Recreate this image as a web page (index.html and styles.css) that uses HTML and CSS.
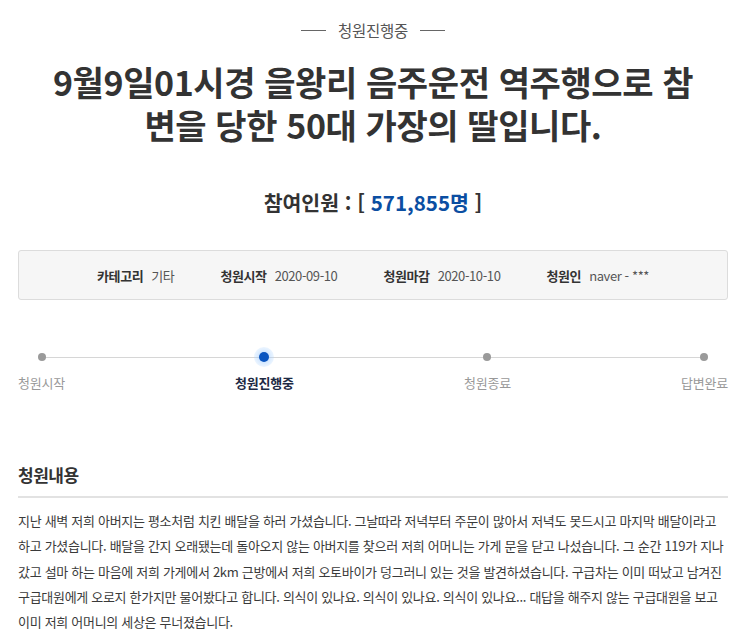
FILE: index.html
```html
<!DOCTYPE html>
<html lang="ko">
<head>
<meta charset="utf-8">
<link rel="stylesheet" href="styles.css">
</head>
<body>
<div class="page">
  <div class="status"><span class="dash"></span><span>청원진행중</span><span class="dash"></span></div>
  <h1 class="title"><span class="tl">9월9일01시경 을왕리 음주운전 역주행으로 참</span><span class="tl">변을 당한 50대 가장의 딸입니다.</span></h1>
  <div class="count">참여인원 : [ <span class="num">571,855명</span> ]</div>
  <div class="info">
    <div class="item"><b>카테고리</b><span>기타</span></div>
    <div class="item"><b>청원시작</b><span>2020-09-10</span></div>
    <div class="item"><b>청원마감</b><span>2020-10-10</span></div>
    <div class="item"><b>청원인</b><span>naver - ***</span></div>
  </div>
  <div class="steps">
    <div class="step"><span class="dot"></span><span class="label">청원시작</span></div>
    <div class="step active"><span class="dot"></span><span class="label">청원진행중</span></div>
    <div class="step"><span class="dot"></span><span class="label">청원종료</span></div>
    <div class="step"><span class="dot"></span><span class="label">답변완료</span></div>
  </div>
  <h2 class="section">청원내용</h2>
  <div class="content">
    <span class="ln">지난 새벽 저희 아버지는 평소처럼 치킨 배달을 하러 가셨습니다. 그날따라 저녁부터 주문이 많아서 저녁도 못드시고 마지막 배달이라고</span>
    <span class="ln">하고 가셨습니다. 배달을 간지 오래됐는데 돌아오지 않는 아버지를 찾으러 저희 어머니는 가게 문을 닫고 나섰습니다. 그 순간 119가 지나</span>
    <span class="ln">갔고 설마 하는 마음에 저희 가게에서 2km 근방에서 저희 오토바이가 덩그러니 있는 것을 발견하셨습니다. 구급차는 이미 떠났고 남겨진</span>
    <span class="ln">구급대원에게 오로지 한가지만 물어봤다고 합니다. 의식이 있나요. 의식이 있나요. 의식이 있나요... 대답을 해주지 않는 구급대원을 보고</span>
    <span class="ln">이미 저희 어머니의 세상은 무너졌습니다.</span>
  </div>
</div>
</body>
</html>
```
FILE: styles.css
```css
* { box-sizing: border-box; }
html, body { margin: 0; padding: 0; background: #fff; }
body {
  font-family: "Noto Sans CJK KR", "Noto Sans", sans-serif;
  color: #333;
  overflow: hidden;
}
.page { padding: 0 15px 0 18px; }

.status {
  padding-top: 20px;
  height: 40px;
  line-height: 20px;
  display: flex;
  justify-content: center;
  align-items: center;
  gap: 12px;
  font-size: 15.5px;
  color: #555;
  letter-spacing: -0.3px;
}
.status .dash { width: 25px; height: 1px; background: #666; }

.title {
  margin: 20px 0 0;
  font-size: 34px;
  line-height: 43px;
  font-weight: 700;
  text-align: center;
  letter-spacing: -0.4px;
  color: #333;
}
.title .tl { display: block; height: 43px; overflow: visible; }

.count {
  margin-top: 42px;
  line-height: 28px;
  font-size: 20.5px;
  font-weight: 700;
  text-align: center;
  color: #333;
}
.count .num { color: #0b4ea2; }

.info {
  margin-top: 34px;
  height: 50px;
  border: 1px solid #dcdcdc;
  border-radius: 3px;
  background: #f6f6f6;
  display: flex;
  justify-content: center;
  align-items: center;
  gap: 46px;
  font-size: 13px;
  letter-spacing: -0.4px;
}
.info .item { display: flex; gap: 8px; align-items: baseline; }
.info b { font-weight: 700; color: #333; }
.info span { color: #555; }

.steps {
  position: relative;
  margin-top: 47px;
  display: flex;
  justify-content: space-between;
}
.steps::before {
  content: "";
  position: absolute;
  left: 23px;
  right: 23px;
  top: 10px;
  height: 1px;
  background: #d6d6d6;
}
.step {
  position: relative;
  display: flex;
  flex-direction: column;
  align-items: center;
  gap: 7px;
}
.dot {
  width: 20px;
  height: 20px;
  display: flex;
  align-items: center;
  justify-content: center;
}
.dot::after {
  content: "";
  width: 8px;
  height: 8px;
  border-radius: 50%;
  background: #9a9a9a;
}
.step.active .dot {
  border-radius: 50%;
  background: radial-gradient(circle, rgba(120,180,255,0.55) 0, rgba(170,210,255,0.35) 55%, rgba(200,225,255,0) 100%);
}
.step.active .dot::after {
  width: 10px;
  height: 10px;
  background: #0a55c0;
}
.label {
  font-size: 13px;
  line-height: 18px;
  color: #999;
  letter-spacing: -0.2px;
}
.step.active .label { color: #1e2a44; font-weight: 700; }

.section {
  margin: 71px 0 0;
  padding-bottom: 9px;
  border-bottom: 2px solid #e2e2e2;
  font-size: 17px;
  line-height: 24px;
  font-weight: 700;
  color: #333;
  letter-spacing: -0.5px;
}

.content {
  margin-top: 10px;
  font-size: 13px;
  line-height: 25.3px;
  color: #3a3a3a;
  letter-spacing: -0.3px;
}
.content .ln { display: block; white-space: nowrap; }
```
